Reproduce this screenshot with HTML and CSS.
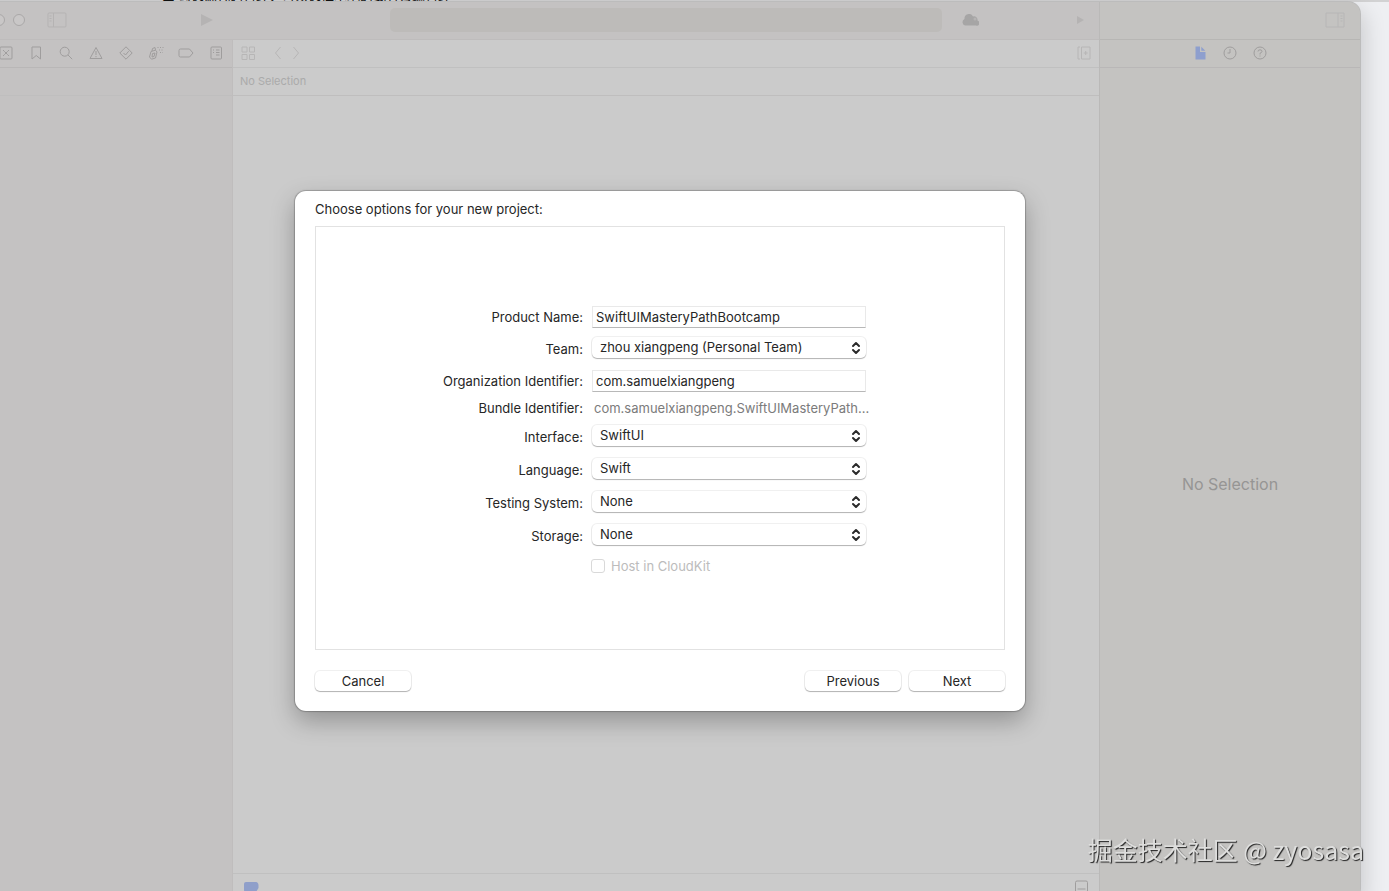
FILE: index.html
```
<!DOCTYPE html>
<html lang="en">

<head>
    <meta charset="UTF-8">
    <title>New Project</title>
    <link rel="stylesheet" href="styles.css">
</head>

<body>

    <p class="page-text" lang="zh">■ 勾选源代码管理，可以选择本地的或者云端管理</p>

    <div class="window">
        <div class="main">
            <div class="toolbar">
                <span class="light"></span>
                <span class="light"></span>
                <span class="light"></span>
                <svg class="icon sidebar-icon" width="20" height="16" viewBox="0 0 20 16">
                    <rect x="1" y="1" width="18" height="14" rx="1" />
                    <path d="M6.500 1v14M2.500 4h2M2.500 6.500h2M2.500 9h2" />
                </svg>
                <svg class="icon solid run-icon" width="14" height="14" viewBox="0 0 14 14">
                    <path d="M1 1l12 6-12 6z" />
                </svg>
                <div class="activity"></div>
                <svg class="icon cloud-icon" width="18" height="12" viewBox="0 0 18 12">
                    <path d="M4 11.500a3.500 3.500 0 0 1-.5-6.500A4.500 4.500 0 0 1 12 2.500a3.500 3.500 0 0 1 4.500 4A2.600 2.600 0 0 1 15 11.500z" />
                    <circle class="cut" cx="14" cy="5" r="1.500" />
                </svg>
                <svg class="icon solid next-icon" width="10" height="10" viewBox="0 0 10 10">
                    <path d="M1 1l7 4-7 4z" />
                </svg>
            </div>

            <div class="columns">
                <div class="navigator">
                    <div class="tabs">
                        <svg class="icon" viewBox="0 0 16 16"><path d="M1.500 3h5l1 2h7v8h-13z" /></svg>
                        <svg class="icon" viewBox="0 0 16 16">
                            <rect x="2" y="2" width="12" height="12" rx="1" />
                            <path d="M5 5l1.500 1.500M11 5L9.500 6.500M5 11l1.500-1.500M11 11L9.500 9.500M6.500 6.500l3 3M9.500 6.500l-3 3" />
                        </svg>
                        <svg class="icon" viewBox="0 0 16 16"><path d="M4 2h8.500v12L8.250 10.500 4 14z" /></svg>
                        <svg class="icon" viewBox="0 0 16 16">
                            <circle cx="6.700" cy="6.700" r="4.500" />
                            <path d="M10 10l4.200 4.200" />
                        </svg>
                        <svg class="icon" viewBox="0 0 16 16">
                            <path d="M8 2.500L14 13.500H2zM8 6v4M8 11v1.200" />
                        </svg>
                        <svg class="icon" viewBox="0 0 16 16">
                            <path d="M8 1.800L14.200 8 8 14.200 1.800 8zM5.500 8l2 2 3.200-3.800" />
                        </svg>
                        <svg class="icon" viewBox="0 0 16 16">
                            <path d="M3 6.500l4.500-1.300L9 7l-1.500 6-4 1.200L1.500 12zM4 6l.5-2.500 2.500-1 .5 2.500M4.500 8.500L7 8l-1 3.500-2 .5z" />
                            <path stroke-dasharray="1 1.500" d="M9.500 2.500h6M11 5h5M12 7.500h3" />
                        </svg>
                        <svg class="icon" viewBox="0 0 16 16">
                            <path d="M2.500 4H11.500L15 8l-3.500 4h-9Q1 12 1 10.500v-5Q1 4 2.500 4z" />
                        </svg>
                        <svg class="icon" viewBox="0 0 16 16">
                            <rect x="3" y="2" width="10.500" height="12" rx="1" />
                            <path d="M5 5h1M8 5h3.500M5 7.500h1M8 7.500h3.500M8 10h3.500" />
                        </svg>
                    </div>
                    <div class="path-bar"></div>
                </div>

                <div class="editor">
                    <div class="editor-bar">
                        <svg class="icon faint" viewBox="0 0 16 16">
                            <path d="M2 2h5v5H2zM9.500 2h5v5h-5zM2 9.500h5v5H2zM9.500 9.500h5v5h-5z" />
                        </svg>
                        <svg class="icon faint back-icon" viewBox="0 0 16 16"><path d="M10.500 2L5.500 8l5 6" /></svg>
                        <svg class="icon faint" viewBox="0 0 16 16"><path d="M5.500 2l5 6-5 6" /></svg>
                        <svg class="icon faint add-icon" viewBox="0 0 16 16">
                            <path d="M4 2H2v12h2M5.500 2H14v12H5.500zM9.700 6v4M7.700 8h4" />
                        </svg>
                    </div>
                    <div class="path-bar">No Selection</div>
                    <div class="canvas"></div>
                    <div class="debug-bar">
                        <svg class="tag-icon" width="16" height="12" viewBox="0 0 16 12">
                            <path d="M3 1h10q2 0 2.500 3v3L13 11H3Q1 11 1 9V3Q1 1 3 1z" />
                        </svg>
                        <svg class="icon" viewBox="0 0 16 16">
                            <rect x="2.500" y="2" width="12" height="12" rx="1.500" />
                            <path d="M4.500 10h8" />
                        </svg>
                    </div>
                </div>
            </div>
        </div>

        <div class="inspector">
            <div class="toolbar toolbar-end">
                <svg class="icon faint" width="20" height="16" viewBox="0 0 20 16">
                    <path d="M1 1h18v14H1zM13 1v14M15.500 4h2M15.500 6.500h2M15.500 9h2" />
                </svg>
            </div>
            <div class="tabs">
                <svg class="icon file-icon" viewBox="0 0 16 16">
                    <path d="M3.500 1.500H8V7h5.500v7.500h-10zM9.300 1.700l4 4H9.300z" />
                </svg>
                <svg class="icon" viewBox="0 0 16 16">
                    <circle cx="8" cy="8" r="6" />
                    <path d="M8 4v4H5.500" />
                </svg>
                <svg class="icon" viewBox="0 0 16 16">
                    <circle cx="8" cy="8" r="6" />
                    <path d="M6 6.500Q6 4.800 8 4.800t2 1.600Q10 7.500 8 8.300V9.500M8 10.500v1" />
                </svg>
            </div>
            <div class="empty">No Selection</div>
        </div>

        <div class="sheet-layer">
            <form class="sheet">
                <h2>Choose options for your new project:</h2>

                <div class="panel">
                    <div class="row field-row">
                        <label for="product-name">Product Name:</label>
                        <input type="text" id="product-name" value="SwiftUIMasteryPathBootcamp">
                    </div>
                    <div class="row popup-row">
                        <label for="team">Team:</label>
                        <div class="popup">
                            <select id="team">
                                <option>zhou xiangpeng (Personal Team)</option>
                            </select>
                            <svg viewBox="0 0 10 14"><path d="M2 5L5 2l3 3M2 9l3 3 3-3" /></svg>
                        </div>
                    </div>
                    <div class="row field-row">
                        <label for="organization">Organization Identifier:</label>
                        <input type="text" id="organization" value="com.samuelxiangpeng">
                    </div>
                    <div class="row static-row">
                        <label for="bundle">Bundle Identifier:</label>
                        <output id="bundle">com.samuelxiangpeng.SwiftUIMasteryPath...</output>
                    </div>
                    <div class="row popup-row">
                        <label for="interface">Interface:</label>
                        <div class="popup">
                            <select id="interface">
                                <option>SwiftUI</option>
                            </select>
                            <svg viewBox="0 0 10 14"><path d="M2 5L5 2l3 3M2 9l3 3 3-3" /></svg>
                        </div>
                    </div>
                    <div class="row popup-row">
                        <label for="language">Language:</label>
                        <div class="popup">
                            <select id="language">
                                <option>Swift</option>
                            </select>
                            <svg viewBox="0 0 10 14"><path d="M2 5L5 2l3 3M2 9l3 3 3-3" /></svg>
                        </div>
                    </div>
                    <div class="row popup-row">
                        <label for="testing">Testing System:</label>
                        <div class="popup">
                            <select id="testing">
                                <option>None</option>
                            </select>
                            <svg viewBox="0 0 10 14"><path d="M2 5L5 2l3 3M2 9l3 3 3-3" /></svg>
                        </div>
                    </div>
                    <div class="row popup-row">
                        <label for="storage">Storage:</label>
                        <div class="popup">
                            <select id="storage">
                                <option>None</option>
                            </select>
                            <svg viewBox="0 0 10 14"><path d="M2 5L5 2l3 3M2 9l3 3 3-3" /></svg>
                        </div>
                    </div>
                    <div class="row check-row">
                        <input type="checkbox" id="cloudkit" disabled>
                        <label for="cloudkit">Host in CloudKit</label>
                    </div>
                </div>

                <div class="buttons">
                    <button type="button">Cancel</button>
                    <button type="button" class="previous">Previous</button>
                    <button type="button">Next</button>
                </div>
            </form>
        </div>
    </div>

    <div class="watermark" lang="zh">掘金技术社区 @ zyosasa</div>

</body>

</html>
```
FILE: styles.css
```
* {
    box-sizing: border-box;
}

body {
    margin: 0;
    height: 100vh;
    overflow: hidden;
    background-color: #eeeff2;
    font-family: Inter, "Liberation Sans", "Noto Sans CJK SC", sans-serif;
    font-size: 13px;
    color: #262626;
}

/* last line of the page behind the window */
.page-text {
    display: flex;
    align-items: flex-end;
    height: 2px;
    margin: 0;
    padding-left: 162px;
    overflow: hidden;
    background-color: #d2d2d3;
    font-family: "Noto Sans CJK SC", sans-serif;
    line-height: 12px;
    color: #111;
}

/* window runs off the left and bottom edges */
.window {
    position: relative;
    display: flex;
    height: calc(100vh + 7px);
    margin: 0 29px 0 -40px;
    border-radius: 12px;
    background-color: #c4c2c2;
    box-shadow: 0 0 0 1px #bcbcbc, 4px 8px 22px rgba(0, 0, 0, 0.16);
}

.main {
    flex: 1;
    display: flex;
    flex-direction: column;
    min-width: 0;
}

.toolbar {
    flex: none;
    display: flex;
    align-items: center;
    height: 38px;
    padding: 0 13px 2px;
    border-bottom: 1px solid #bebcbc;
}

.light {
    width: 12px;
    height: 12px;
    margin-right: 8px;
    border: 1px solid #aaa8a8;
    border-radius: 50%;
    background-color: #c9c7c7;
}

.icon {
    flex: none;
    fill: none;
    stroke: #9f9d9d;
    stroke-width: 1;
}

.faint {
    stroke: #b7b6b6;
}

.solid {
    fill: #b5b3b3;
    stroke: none;
}

.sidebar-icon {
    margin-left: 14px;
    stroke: #b5b3b3;
}

.run-icon {
    margin-left: 133px;
}

.activity {
    flex: 1;
    height: 24px;
    margin: 0 19px 0 176px;
    border-radius: 5px;
    background-color: #bdbbb9;
}

.cloud-icon {
    fill: #a6a5a5;
    stroke: none;
}

.cut {
    fill: #b5b3b3;
}

.next-icon {
    margin-left: 97px;
}

.columns {
    flex: 1;
    display: flex;
    min-height: 0;
}

.navigator {
    width: 273px;
    border-right: 1px solid #bfbdbd;
}

.tabs {
    flex: none;
    display: flex;
    align-items: center;
    justify-content: center;
    gap: 14px;
    height: 28px;
    padding-bottom: 1px;
    border-bottom: 1px solid #b9b7b7;
}

.tabs .icon,
.editor-bar .icon,
.debug-bar .icon {
    width: 16px;
    height: 16px;
}

.path-bar {
    flex: none;
    height: 28px;
    padding: 0 7px;
    border-bottom: 1px solid #bfbebe;
    font-size: 11px;
    line-height: 27px;
    color: #aaa;
}

.editor {
    flex: 1;
    display: flex;
    flex-direction: column;
    min-width: 0;
    background-color: #cbcbcb;
}

.editor-bar {
    flex: none;
    display: flex;
    align-items: center;
    gap: 2px;
    height: 28px;
    padding: 0 7px 1px;
    border-bottom: 1px solid #c0c0c0;
}

.back-icon {
    margin-left: 12px;
}

.add-icon {
    margin-left: auto;
}

.canvas {
    flex: 1;
}

.debug-bar {
    flex: none;
    display: flex;
    align-items: center;
    justify-content: space-between;
    height: 27px;
    padding: 0 10px;
    border-top: 1px solid #c0c0c0;
}

.tag-icon {
    fill: #8f9fca;
}

.inspector {
    display: flex;
    flex-direction: column;
    width: 261px;
    border-left: 1px solid #bab9b8;
    border-radius: 0 12px 0 0;
    background-color: #c4c3c1;
}

.toolbar-end {
    justify-content: flex-end;
    padding: 0 15px 2px;
    border-color: #b7b6b4;
}

.file-icon {
    fill: #8e9fce;
    stroke: none;
}

.empty {
    flex: 1;
    display: flex;
    align-items: center;
    justify-content: center;
    font-size: 16px;
    color: #969594;
}

/* options sheet over the window */
.sheet-layer {
    position: absolute;
    inset: 0;
    display: flex;
    align-items: center;
    justify-content: center;
}

.sheet {
    width: 730px;
    padding: 9px 20px 20px;
    border-radius: 11px;
    background-color: #fff;
    box-shadow: 0 0 1px 1px rgba(0, 0, 0, 0.22), 0 10px 24px rgba(0, 0, 0, 0.28);
}

h2 {
    margin: 0 0 8px;
    font-size: 13px;
    font-weight: 400;
    line-height: 18px;
}

.panel {
    min-height: 424px;
    padding-top: 79px;
    border: 1px solid #e2e2e2;
}

.row {
    display: grid;
    grid-template-columns: 267px 274px;
    column-gap: 9px;
    align-items: start;
}

.row label {
    line-height: 22px;
    text-align: right;
}

.field-row {
    height: 31px;
}

.popup-row {
    height: 33px;
}

.popup-row label {
    line-height: 24px;
}

.static-row {
    height: 24px;
}

.static-row label,
.static-row output {
    line-height: 14px;
    white-space: nowrap;
}

.static-row output {
    padding-left: 2px;
    color: #7b7b7b;
}

input,
select,
button {
    margin: 0;
    font: inherit;
    color: inherit;
}

input[type="text"] {
    height: 22px;
    padding: 0 3px;
    border: 1px solid #e9e9e9;
    border-bottom-color: #b8b8b8;
    background-color: #fff;
}

.popup {
    position: relative;
}

.popup select {
    display: block;
    width: 100%;
    height: 21px;
    padding: 0 8px;
    line-height: 21px;
    appearance: none;
}

.popup svg {
    position: absolute;
    top: 4px;
    right: 5px;
    width: 10px;
    height: 14px;
    fill: none;
    stroke: #2b2b2b;
    stroke-width: 2;
    stroke-linecap: round;
    stroke-linejoin: round;
    pointer-events: none;
}

.popup select,
button {
    border: none;
    border-radius: 5px;
    background-color: #fff;
    box-shadow: 0 0 0 1px rgba(0, 0, 0, 0.06), 0 1px 1px rgba(0, 0, 0, 0.26);
}

.check-row {
    grid-template-columns: 14px auto;
    column-gap: 6px;
    align-items: center;
    padding-left: 275px;
}

.check-row label {
    line-height: 18px;
    text-align: left;
    color: #bcbcbc;
}

.check-row input {
    width: 14px;
    height: 14px;
    border: 1px solid #d9d9d9;
    border-radius: 3px;
    background-color: #fff;
    appearance: none;
}

.buttons {
    display: flex;
    gap: 8px;
    margin-top: 21px;
}

button {
    width: 96px;
    height: 20px;
    padding: 0;
    line-height: 20px;
}

.previous {
    margin-left: auto;
}

.watermark {
    position: fixed;
    right: 25px;
    bottom: 24px;
    font-family: "Noto Sans CJK SC", sans-serif;
    font-size: 25px;
    line-height: 36px;
    color: #dededd;
    text-shadow: 1px 1px 1px #222;
}
```
